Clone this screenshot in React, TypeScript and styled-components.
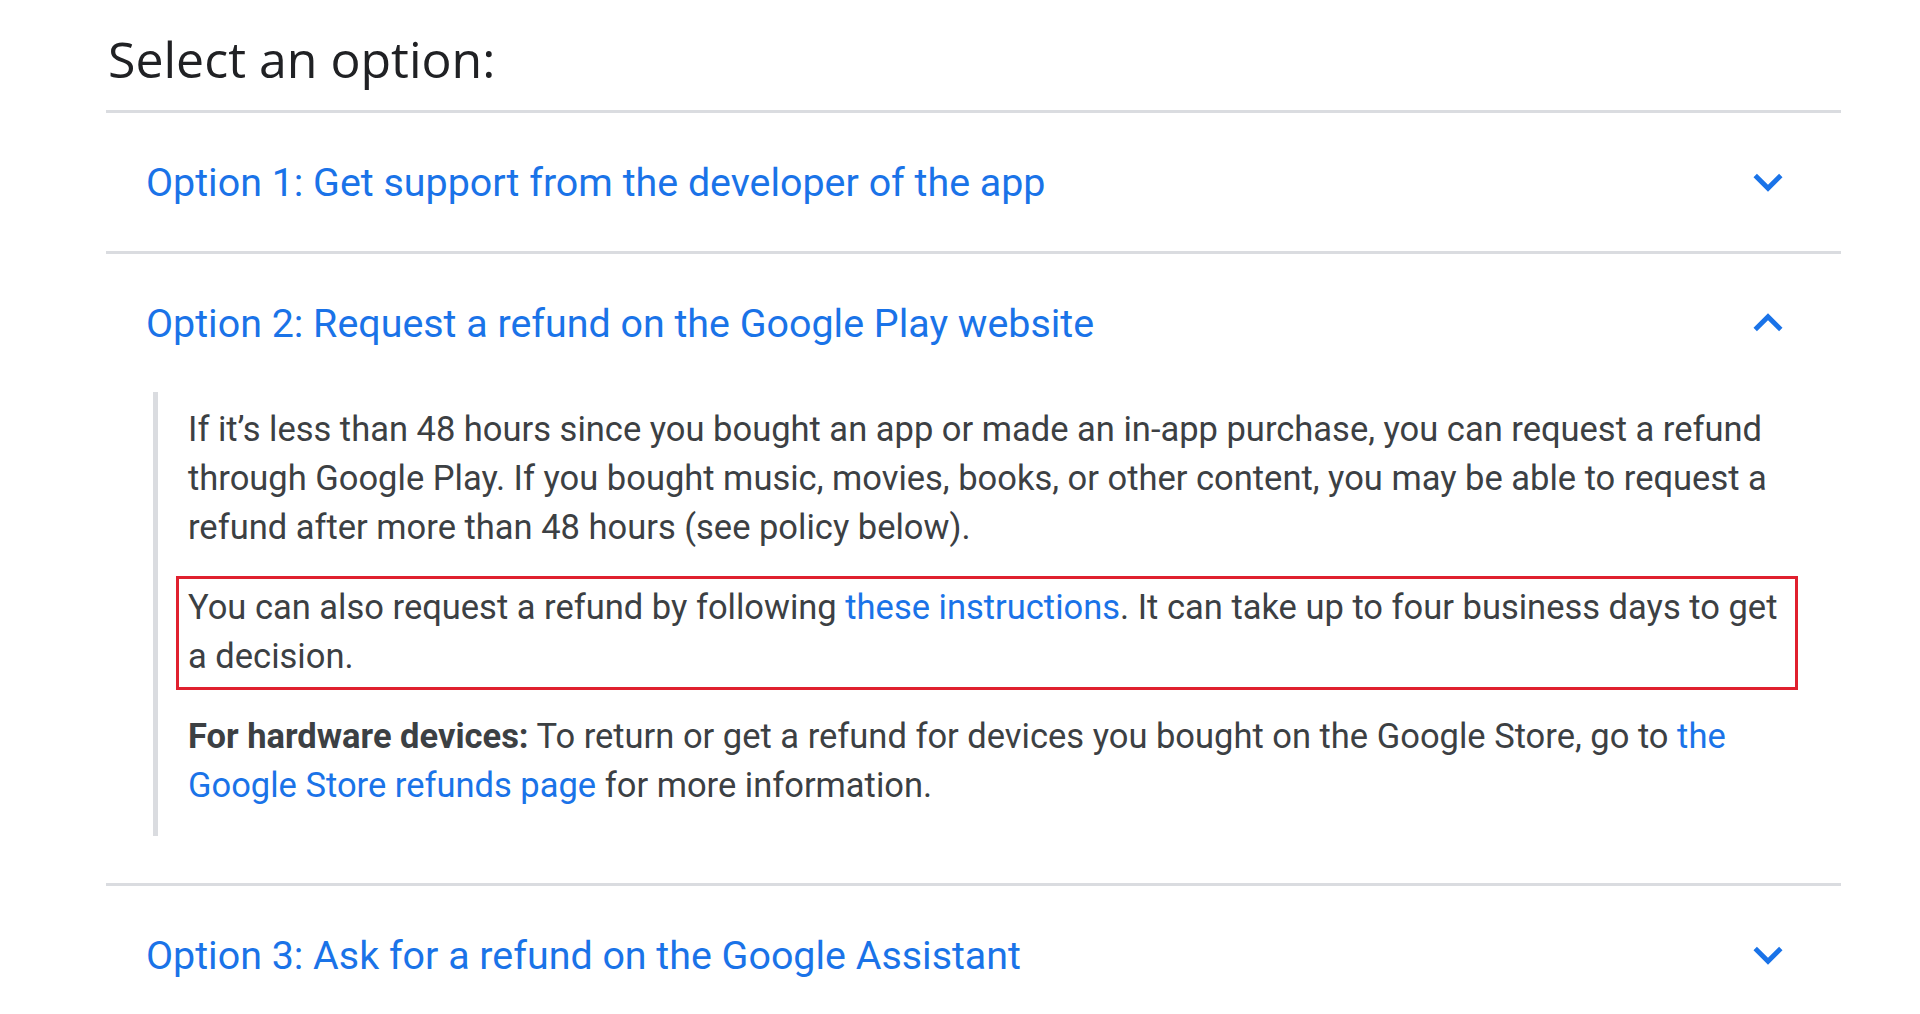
import React from 'react';
import styled, { createGlobalStyle } from 'styled-components';

const GlobalStyle = createGlobalStyle`
	html, body {
		margin: 0;
		padding: 0;
		background: #ffffff;
	}
	body {
		font-family: Roboto, 'Liberation Sans', Arial, sans-serif;
		-webkit-font-smoothing: antialiased;
	}
`;

const Page = styled.div`
	width: 1735px;
	padding: 31px 0 0 106px;
`;

const Heading = styled.h2`
	margin: 0 0 23px 2px;
	font-family: 'Open Sans', 'Noto Sans', sans-serif;
	font-weight: 500;
	font-size: 50px;
	line-height: 56px;
	color: #202124;
`;

const Item = styled.section`
	border-top: 3px solid #dadce0;
`;

const Header = styled.div`
	display: flex;
	align-items: center;
	justify-content: space-between;
	height: 138px;
	padding: 0 44px 0 40px;
	cursor: pointer;
`;

const Title = styled.span`
	font-size: 39.4px;
	color: #1a73e8;
`;

const Chevron = styled.svg<{ $open: boolean }>`
	width: 58px;
	height: 58px;
	fill: #1a73e8;
	transform: ${(p) => (p.$open ? 'rotate(180deg)' : 'none')};
`;

const Body = styled.div`
	display: flex;
	flex-direction: column;
	margin: 0 0 47px 47px;
	padding: 13px 46px 26px 30px;
	border-left: 5px solid #dadce0;
`;

const Paragraph = styled.p<{ $highlight?: boolean }>`
	margin: 31px 0 0;
	font-size: 34.5px;
	line-height: 49px;
	color: #3c4043;
	&:first-child {
		margin-top: 0;
	}
	${(p) =>
		p.$highlight &&
		`
		margin: 24px -3px -9px -12px;
		padding: 4px 0 6px 9px;
		border: 3px solid #e0202e;
	`}
`;

const Link = styled.a`
	color: #1a73e8;
	text-decoration: none;
`;

const Strong = styled.b`
	font-weight: 700;
`;

interface OptionProps {
	title: string;
	open?: boolean;
	children?: React.ReactNode;
}

const Option = ({ title, open = false, children }: OptionProps) => (
	<Item>
		<Header>
			<Title>{title}</Title>
			<Chevron $open={open} viewBox="0 0 24 24">
				<path d="M16.59 8.59L12 13.17 7.41 8.59 6 10l6 6 6-6z" />
			</Chevron>
		</Header>
		{open && <Body>{children}</Body>}
	</Item>
);

const App = () => {
	return (
		<>
			<GlobalStyle />
			<Page>
				<Heading>Select an option:</Heading>
				<Option title="Option 1: Get support from the developer of the app" />
				<Option title="Option 2: Request a refund on the Google Play website" open>
					<Paragraph>
						If it’s less than 48 hours since you bought an app or made an in-app purchase, you can
						request a refund through Google Play. If you bought music, movies, books, or other
						content, you may be able to request a refund after more than 48 hours (see policy below).
					</Paragraph>
					<Paragraph $highlight>
						You can also request a refund by following <Link href="#">these instructions</Link>. It
						can take up to four business days to get a decision.
					</Paragraph>
					<Paragraph>
						<Strong>For hardware devices:</Strong> To return or get a refund for devices you bought
						on the Google Store, go to <Link href="#">the Google Store refunds page</Link> for more
						information.
					</Paragraph>
				</Option>
				<Option title="Option 3: Ask for a refund on the Google Assistant" />
			</Page>
		</>
	);
};

export default App;
